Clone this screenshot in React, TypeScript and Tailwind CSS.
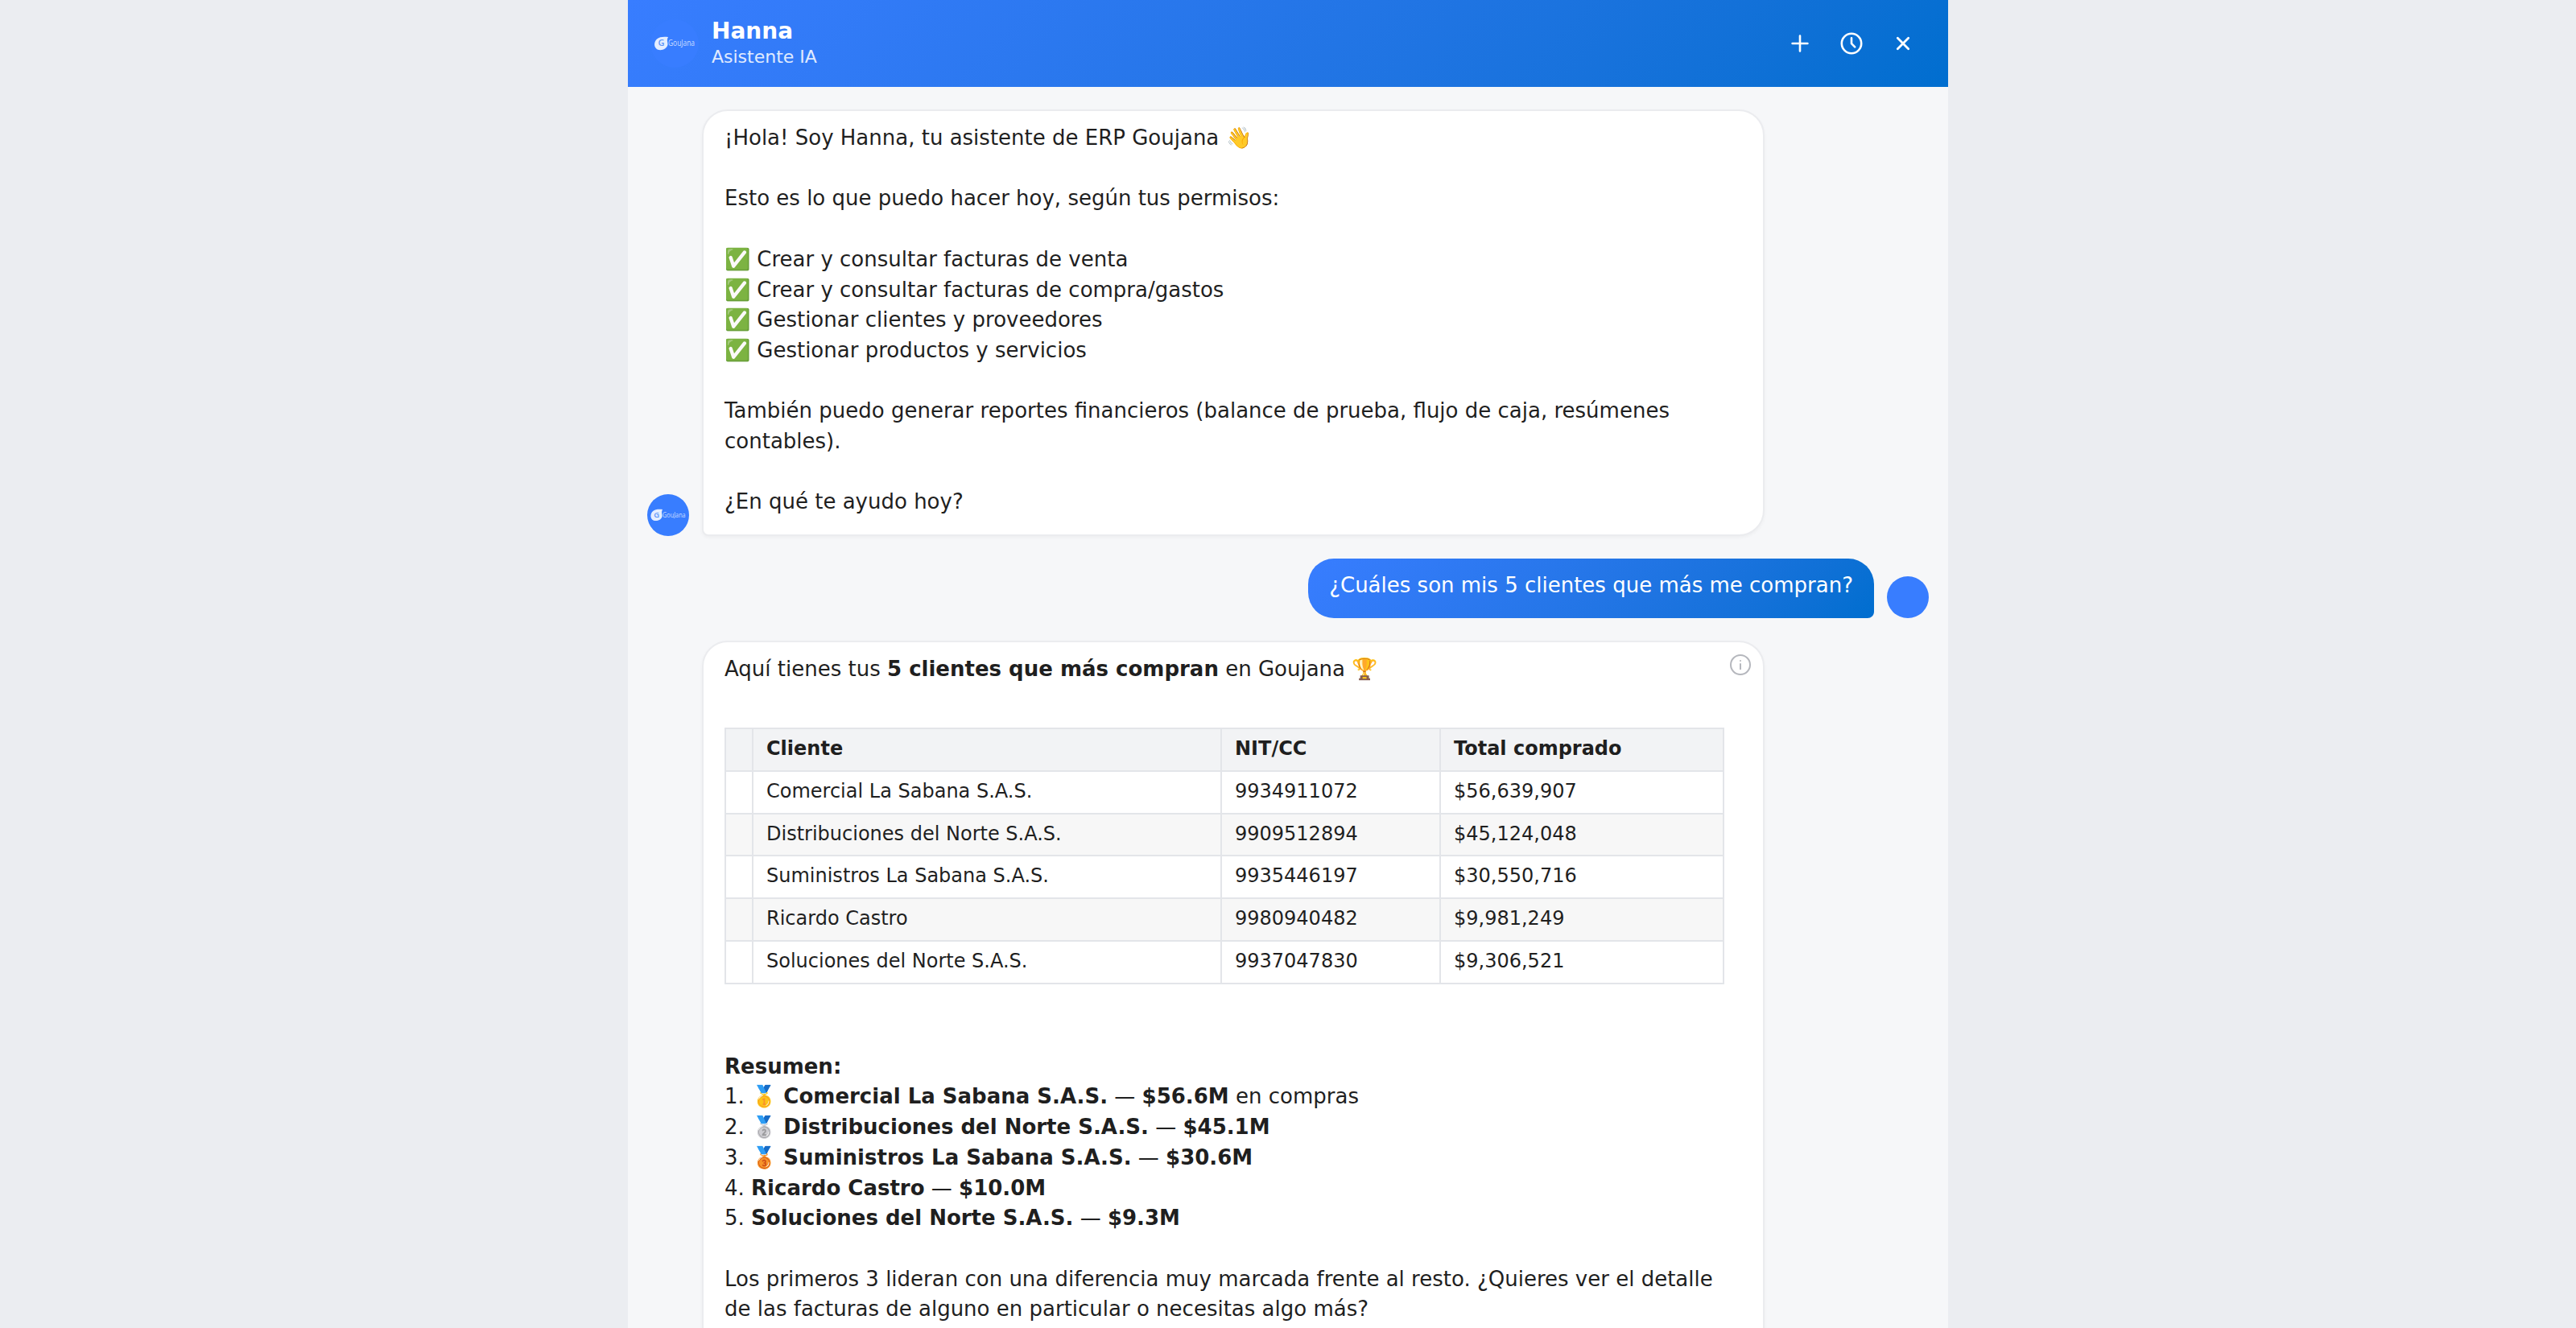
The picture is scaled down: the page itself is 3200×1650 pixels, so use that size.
import { clsx } from "clsx";
import type { ReactNode } from "react";

const clients = [
  { name: "Comercial La Sabana S.A.S.", nit: "9934911072", total: "$56,639,907" },
  { name: "Distribuciones del Norte S.A.S.", nit: "9909512894", total: "$45,124,048" },
  { name: "Suministros La Sabana S.A.S.", nit: "9935446197", total: "$30,550,716" },
  { name: "Ricardo Castro", nit: "9980940482", total: "$9,981,249" },
  { name: "Soluciones del Norte S.A.S.", nit: "9937047830", total: "$9,306,521" },
];

function Logo({ className }: { className: string }) {
  return (
    <svg viewBox="0 0 60 60" className={clsx("shrink-0 rounded-full bg-[#387dff]", className)}>
      <path
        d="M22 22C17 21.4 11.5 21.4 8 24.6C4 28.4 4 35 8.6 37.4C13.5 39.6 20 37 21.4 32C22 29 19.6 26 22 22Z"
        fill="#e4eeff"
      />
      <text x="9.6" y="33.4" fontSize="11" fontWeight="600" fill="#5b94f8" fontFamily="Open Sans, sans-serif">
        G
      </text>
      <text x="22" y="33.2" fontSize="10" textLength="33" lengthAdjust="spacingAndGlyphs" fill="#c8dcff" fontFamily="Open Sans, sans-serif">
        GouJana
      </text>
    </svg>
  );
}

function Bubble({ mine, children }: { mine?: boolean; children: ReactNode }) {
  return (
    <div
      className={clsx(
        "relative whitespace-pre-wrap rounded-[32px] px-[26px] pt-[15px] pb-[21px] text-[26px] leading-[37.7px]",
        mine
          ? "rounded-br-[8px] bg-linear-135 from-[#387dff] to-[#006ecf] text-white"
          : "w-[1320px] rounded-bl-[8px] border-2 border-[#ebecef] bg-white text-[#1f1f1f] shadow-[0_2px_4px_rgba(0,0,0,0.04)]"
      )}
    >
      {children}
    </div>
  );
}

export default function App() {
  return (
    <div className="flex h-[1650px] justify-center overflow-hidden bg-[#ebedf1] font-['DejaVu_Sans',sans-serif]">
      <div className="flex w-[1640px] flex-col bg-[#f6f7f9]">
        <header className="flex h-[108px] shrink-0 items-center gap-4 bg-linear-135 from-[#387dff] to-[#006ecf] pr-6 pl-7 text-white">
          <Logo className="h-[60px] w-[60px]" />
          <div className="flex-1">
            <div className="text-[28px] leading-[34px] font-bold">Hanna</div>
            <div className="text-[22px] leading-[30px] text-white/85">Asistente IA</div>
          </div>
          <div className="flex items-center">
            <button className="flex h-16 w-16 items-center justify-center">
              <svg viewBox="0 0 32 32" className="h-8 w-8" stroke="currentColor" strokeWidth="2.6" strokeLinecap="round">
                <path d="M16 6.6V25.4M6.6 16H25.4" />
              </svg>
            </button>
            <button className="flex h-16 w-16 items-center justify-center">
              <svg viewBox="0 0 32 32" className="h-8 w-8" fill="none" stroke="currentColor" strokeWidth="2.6" strokeLinecap="round" strokeLinejoin="round">
                <circle cx="16" cy="16" r="12.2" />
                <path d="M16 9.2V16.2L20.2 20.4" />
              </svg>
            </button>
            <button className="flex h-16 w-16 items-center justify-center">
              <svg viewBox="0 0 32 32" className="h-8 w-8" stroke="currentColor" strokeWidth="2.8" strokeLinecap="round">
                <path d="M9.3 9.3L22.7 22.7M22.7 9.3L9.3 22.7" />
              </svg>
            </button>
          </div>
        </header>

        <main className="flex flex-col gap-7 px-6 pt-7">
          <div className="flex items-end gap-4">
            <Logo className="h-[52px] w-[52px]" />
            <Bubble>
              {`¡Hola! Soy Hanna, tu asistente de ERP Goujana 👋

Esto es lo que puedo hacer hoy, según tus permisos:

✅ Crear y consultar facturas de venta
✅ Crear y consultar facturas de compra/gastos
✅ Gestionar clientes y proveedores
✅ Gestionar productos y servicios

También puedo generar reportes financieros (balance de prueba, flujo de caja, resúmenes contables).

¿En qué te ayudo hoy?`}
            </Bubble>
          </div>

          <div className="flex items-end justify-end gap-4">
            <Bubble mine>¿Cuáles son mis 5 clientes que más me compran?</Bubble>
            <div className="h-[52px] w-[52px] rounded-full bg-[#387dff]" />
          </div>

          <div className="flex items-end gap-4">
            <div className="w-[52px] shrink-0" />
            <Bubble>
              <svg viewBox="0 0 26 26" className="absolute top-[15px] right-[15px] h-[26px] w-[26px]" fill="none" stroke="#b5b7bd" strokeWidth="2" strokeLinecap="round">
                <circle cx="13" cy="13" r="12" />
                <path d="M13 12V18.2M13 8V8.1" />
              </svg>
              <p>
                Aquí tienes tus <b>5 clientes que más compran</b> en Goujana 🏆
              </p>
              <table className="mt-[53.4px] w-[1242px] table-fixed border-collapse text-left text-[24px] leading-[34.8px]">
                <colgroup>
                  <col className="w-[34px]" />
                  <col className="w-[582px]" />
                  <col className="w-[272px]" />
                  <col />
                </colgroup>
                <thead>
                  <tr className="bg-[#f2f3f5]">
                    <th className="border-2 border-[#e3e5e9]" />
                    <th className="border-2 border-[#e3e5e9] px-4 pt-[7px] pb-[9px]">Cliente</th>
                    <th className="border-2 border-[#e3e5e9] px-4 pt-[7px] pb-[9px]">NIT/CC</th>
                    <th className="border-2 border-[#e3e5e9] px-4 pt-[7px] pb-[9px]">Total comprado</th>
                  </tr>
                </thead>
                <tbody>
                  {clients.map((c) => (
                    <tr key={c.nit} className="even:bg-[#f7f7f7]">
                      <td className="border-2 border-[#e3e5e9]" />
                      <td className="border-2 border-[#e3e5e9] px-4 pt-[7px] pb-[9px]">{c.name}</td>
                      <td className="border-2 border-[#e3e5e9] px-4 pt-[7px] pb-[9px]">{c.nit}</td>
                      <td className="border-2 border-[#e3e5e9] px-4 pt-[7px] pb-[9px]">{c.total}</td>
                    </tr>
                  ))}
                </tbody>
              </table>
              <div className="mt-[84px]">
                <p className="font-bold">Resumen:</p>
                <p>1. 🥇 <b>Comercial La Sabana S.A.S.</b> — <b>$56.6M</b> en compras</p>
                <p>2. 🥈 <b>Distribuciones del Norte S.A.S.</b> — <b>$45.1M</b></p>
                <p>3. 🥉 <b>Suministros La Sabana S.A.S.</b> — <b>$30.6M</b></p>
                <p>4. <b>Ricardo Castro</b> — <b>$10.0M</b></p>
                <p>5. <b>Soluciones del Norte S.A.S.</b> — <b>$9.3M</b></p>
              </div>
              <p className="mt-[37.7px] pb-10">
                Los primeros 3 lideran con una diferencia muy marcada frente al resto. ¿Quieres ver el detalle de las facturas de alguno en particular o necesitas algo más?
              </p>
            </Bubble>
          </div>
        </main>
      </div>
    </div>
  );
}
